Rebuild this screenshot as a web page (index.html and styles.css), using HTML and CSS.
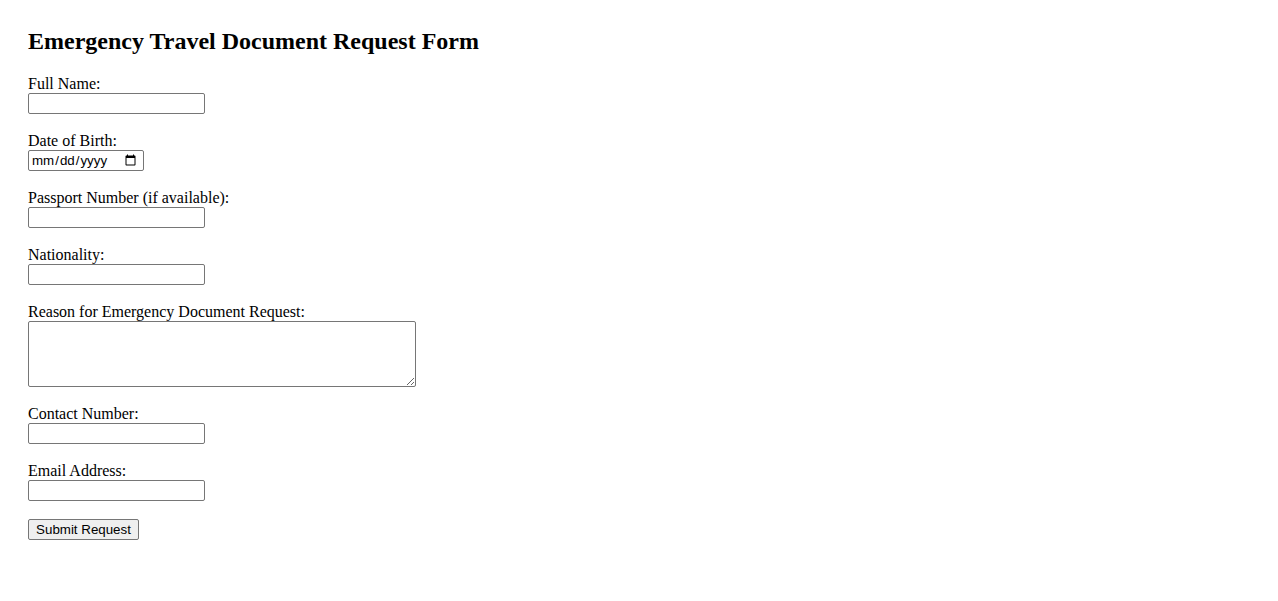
FILE: index.html
```html
<!DOCTYPE html>
<html>
<head>
<meta charset="utf-8">
<title>Emergency Travel Document Request Form</title>
<link rel="stylesheet" href="styles.css">
</head>
<body class="page">
<h2 class="title">Emergency Travel Document Request Form</h2>
<form class="form">
<label for="name">Full Name:</label><br>
<input class="field" type="text" id="name"><br><br>
<label for="dob">Date of Birth:</label><br>
<input class="field date" type="date" id="dob"><br><br>
<label for="passport">Passport Number (if available):</label><br>
<input class="field" type="text" id="passport"><br><br>
<label for="nat">Nationality:</label><br>
<input class="field" type="text" id="nat"><br><br>
<label for="reason">Reason for Emergency Document Request:</label><br>
<textarea class="area" id="reason" rows="4" cols="50"></textarea><br><br>
<label for="phone">Contact Number:</label><br>
<input class="field" type="tel" id="phone"><br><br>
<label for="email">Email Address:</label><br>
<input class="field" type="email" id="email"><br><br>
<button class="submit" type="submit">Submit Request</button>
</form>
</body>
</html>
```
FILE: styles.css
```css
.page {
  margin: 8px;
  padding: 20px;
  font-family: "Liberation Serif", "Times New Roman", serif;
  font-size: 16px;
  color: #000;
  background: #fff;
}
.title {
  margin: 0 0 20px 0;
  font-size: 24px;
  font-weight: bold;
}
.form {
  margin: 0;
}
.field {
  font-family: "Liberation Sans", Arial, sans-serif;
  font-size: 13.333px;
  width: 177px;
  height: 21px;
  box-sizing: border-box;
  border: 1px solid #767676;
  border-radius: 2px;
  padding: 1px 2px;
  margin: 0;
}
.date {
  width: 116px;
  padding: 1px 4px 1px 2px;
}
.area {
  width: 388px;
  height: 66px;
  box-sizing: border-box;
  border: 1px solid #767676;
  border-radius: 2px;
  margin: 0;
  font-family: "Liberation Mono", monospace;
  font-size: 13.333px;
  vertical-align: bottom;
}
.submit {
  font-family: "Liberation Sans", Arial, sans-serif;
  font-size: 13.333px;
  width: 111px;
  height: 21px;
  padding: 1px 6px;
  border: 1px solid #767676;
  border-radius: 2px;
  background: #efefef;
  color: #000;
  margin: 0;
}
```
